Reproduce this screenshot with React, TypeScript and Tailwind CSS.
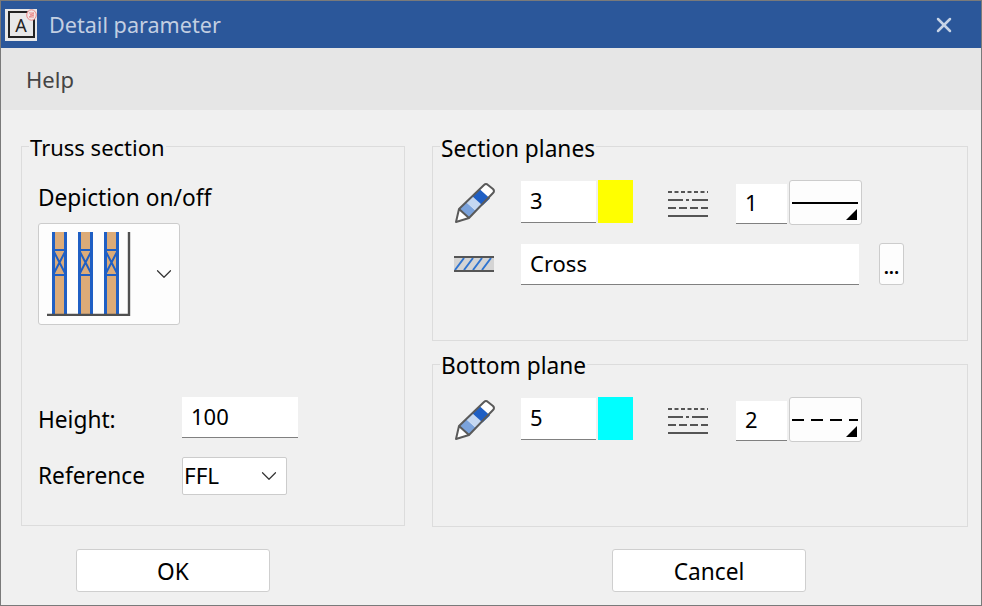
import { ChevronDown, X } from "lucide-react";

const FONT = "font-['Noto_Sans','Open_Sans',sans-serif]";

function PencilIcon() {
  return (
    <svg width="42" height="42" viewBox="0 0 42 42" fill="none" className="shrink-0">
      <path d="M2 40 L5 27 L32 2 L40 9 L15 36 Z" fill="#fff" />
      <path d="M5 27 L12.3 20.3 L22.3 29.3 L15 36 Z" fill="#7ba3dc" />
      <path d="M12.3 20.3 L18.5 14.5 L28.5 23.5 L22.3 29.3 Z" fill="#c5d8f2" />
      <path d="M18.5 14.5 L26 7.5 L36 16.5 L28.5 23.5 Z" fill="#1f5fc4" />
      <path d="M2 40 L5 27 L30 3 Q32 1 34 3 L39 7 Q41 9 39 11 L15 36 Z M5 27 L15 36" stroke="#5a5a5a" strokeWidth="2" strokeLinejoin="round" />
    </svg>
  );
}

function LineTypesIcon() {
  return (
    <svg width="40" height="28" viewBox="0 0 40 28" fill="none" className="shrink-0">
      <path d="M0 2 H40" stroke="#555" strokeWidth="2" strokeDasharray="4 2.5" />
      <path d="M0 10 H15 M18 10 H21 M24 10 H40" stroke="#555" strokeWidth="2" />
      <path d="M0 18 H40" stroke="#555" strokeWidth="2" strokeDasharray="8 3" />
      <path d="M0 26 H40" stroke="#555" strokeWidth="2" />
    </svg>
  );
}

function HatchIcon() {
  return (
    <svg width="40" height="16" viewBox="0 0 40 16" className="shrink-0">
      <rect x="0" y="1" width="40" height="14" fill="#d4d4d4" />
      <path d="M1 14 L10 2 M10 14 L19 2 M19 14 L28 2 M28 14 L37 2" stroke="#2f74d0" strokeWidth="2" />
      <path d="M0 1 H40 M0 15 H40" stroke="#555" strokeWidth="2" />
    </svg>
  );
}

function TrussIcon() {
  const posts = [1, 27, 53];
  return (
    <svg width="84" height="84" viewBox="0 0 84 84" fill="none">
      {posts.map((x) => (
        <g key={x} transform={`translate(${x} 0)`}>
          <rect x="5" y="0" width="13" height="82" fill="#dcab78" />
          <path d="M5.5 0 V82 M17.5 0 V82" stroke="#1f5fc4" strokeWidth="3" />
          <path d="M5 18 H18 M5 43 H18 M5 18 L18 43 M18 18 L5 43" stroke="#1f5fc4" strokeWidth="2" />
        </g>
      ))}
      <path d="M82 0 V83 H0" stroke="#505050" strokeWidth="2.4" />
    </svg>
  );
}

function AppIcon() {
  return (
    <div className="relative flex h-8 w-8 items-center justify-center bg-[#e8e8e8]">
      <div className="flex h-[27px] w-[27px] items-center justify-center border-2 border-[#222] text-[18px] leading-none text-[#222]">
        A
      </div>
      <svg width="11" height="12" viewBox="0 0 11 12" fill="none" className="absolute right-0 top-0">
        <ellipse cx="5.5" cy="6" rx="4.8" ry="5.2" fill="#f0e6e6" stroke="#e88a8a" />
        <path d="M3 4 H8 L4 6 H8 L3 8 H8" stroke="#e88a8a" />
      </svg>
    </div>
  );
}

function Group({
  title,
  titleClass,
  className,
  children,
}: {
  title: string;
  titleClass: string;
  className: string;
  children: React.ReactNode;
}) {
  return (
    <div className={`relative border border-[#dcdcdc] ${className}`}>
      <span className={`absolute left-[7px] bg-[#f0f0f0] px-px leading-[30px] ${titleClass}`}>{title}</span>
      {children}
    </div>
  );
}

function Input({ value, className }: { value: string; className: string }) {
  return (
    <div className={`flex items-center border-b border-[#808080] bg-white pl-[9px] text-[22px] leading-none ${className}`}>
      {value}
    </div>
  );
}

function LineSelect({ dashed }: { dashed?: boolean }) {
  return (
    <div className="relative ml-[2px] h-[45px] w-[73px] rounded-[3px] border border-[#cccccc] bg-[#fdfdfd]">
      <svg width="66" height="4" className="absolute left-[2px] top-[20px]">
        <path d="M0 2 H66" stroke="#000" strokeWidth="2" strokeDasharray={dashed ? "12 7" : undefined} />
      </svg>
      <svg width="11" height="11" className="absolute bottom-[4px] right-[4px]">
        <path d="M11 0 V11 H0 Z" fill="#000" />
      </svg>
    </div>
  );
}

function PenRow({ pen, color, line, dashed }: { pen: string; color: string; line: string; dashed?: boolean }) {
  return (
    <div className="flex items-start">
      <div className="mt-[2px] w-[67px] shrink-0">
        <PencilIcon />
      </div>
      <Input value={pen} className="mt-px h-[42px] w-[75px] pb-[4px]" />
      <div className={`ml-[2px] h-[43px] w-[35px] ${color}`} />
      <div className="ml-[35px] mt-[10px]">
        <LineTypesIcon />
      </div>
      <Input value={line} className="ml-[28px] mt-1 h-[40px] w-[51px] pb-[3px]" />
      <LineSelect dashed={dashed} />
    </div>
  );
}

function Button({ label }: { label: string }) {
  return (
    <div className="flex h-[43px] w-[194px] items-center justify-center rounded-[3px] border border-[#cfcfcf] bg-white pt-[4px]">
      {label}
    </div>
  );
}

export default function App() {
  return (
    <div className={`${FONT} flex h-[606px] w-[982px] flex-col border border-[#7a7a7a] bg-[#f0f0f0] text-[22.7px] text-black`}>
      {/* title bar */}
      <div className="flex h-[47px] shrink-0 items-center bg-[#2b579a] pl-1 pr-[25px] text-[21.6px] text-[#c3cfe2]">
        <AppIcon />
        <span className="ml-3 flex-1 translate-y-px">Detail parameter</span>
        <X size={24} strokeWidth={2.5} className="text-[#c8d4e6]" />
      </div>

      {/* menu */}
      <div className="flex h-[62px] shrink-0 items-center bg-[#e6e6e6] pl-[25px] text-[22px] text-[#444]">Help</div>

      <div className="flex flex-1 flex-col pl-5 pt-9">
        <div className="flex gap-[27px]">
          <Group title="Truss section" titleClass="-top-[15px] text-[22px]" className="h-[380px] w-[384px] shrink-0 pl-4 pt-[33px]">
            <div className="translate-y-[2px] leading-[32px]">Depiction on/off</div>
            <div className="mt-[11px] flex h-[102px] w-[142px] items-center rounded-[3px] border border-[#cccccc] bg-[#fdfdfd] pl-2">
              <TrussIcon />
              <ChevronDown size={26} strokeWidth={1.1} className="ml-5 text-[#333]" />
            </div>
            <div className="mt-[72px] flex items-center">
              <span className="w-[144px] translate-y-[3px]">Height:</span>
              <Input value="100" className="h-[41px] w-[116px] pb-[2px]" />
            </div>
            <div className="mt-[19px] flex items-center">
              <span className="w-[144px]">Reference</span>
              <div className="flex h-[38px] w-[105px] items-center justify-between rounded-[2px] border border-[#cccccc] bg-white pl-px pr-1 text-[22.5px]">
                FFL
                <ChevronDown size={26} strokeWidth={1.1} className="text-[#333]" />
              </div>
            </div>
          </Group>

          <div className="flex w-[536px] shrink-0 flex-col gap-[23px]">
            <Group title="Section planes" titleClass="-top-[13px]" className="h-[195px] pl-[21px] pt-[33px]">
              <PenRow pen="3" color="bg-[#ffff00]" line="1" />
              <div className="mt-[18px] flex items-center">
                <div className="w-[67px] shrink-0">
                  <HatchIcon />
                </div>
                <Input value="Cross" className="h-[41px] w-[338px] pb-[2px]" />
                <div className="ml-5 flex h-[42px] w-[25px] items-end justify-center rounded-[3px] border border-[#cccccc] bg-[#fdfdfd] pb-[7px] text-[19px] font-semibold leading-none">
                  ...
                </div>
              </div>
            </Group>
            <Group title="Bottom plane" titleClass="-top-[14px]" className="h-[163px] pl-[21px] pt-[32px]">
              <PenRow pen="5" color="bg-[#00ffff]" line="2" dashed />
            </Group>
          </div>
        </div>

        <div className="mt-[22px] flex pl-[55px]">
          <Button label="OK" />
          <div className="ml-[342px]">
            <Button label="Cancel" />
          </div>
        </div>
      </div>
    </div>
  );
}
